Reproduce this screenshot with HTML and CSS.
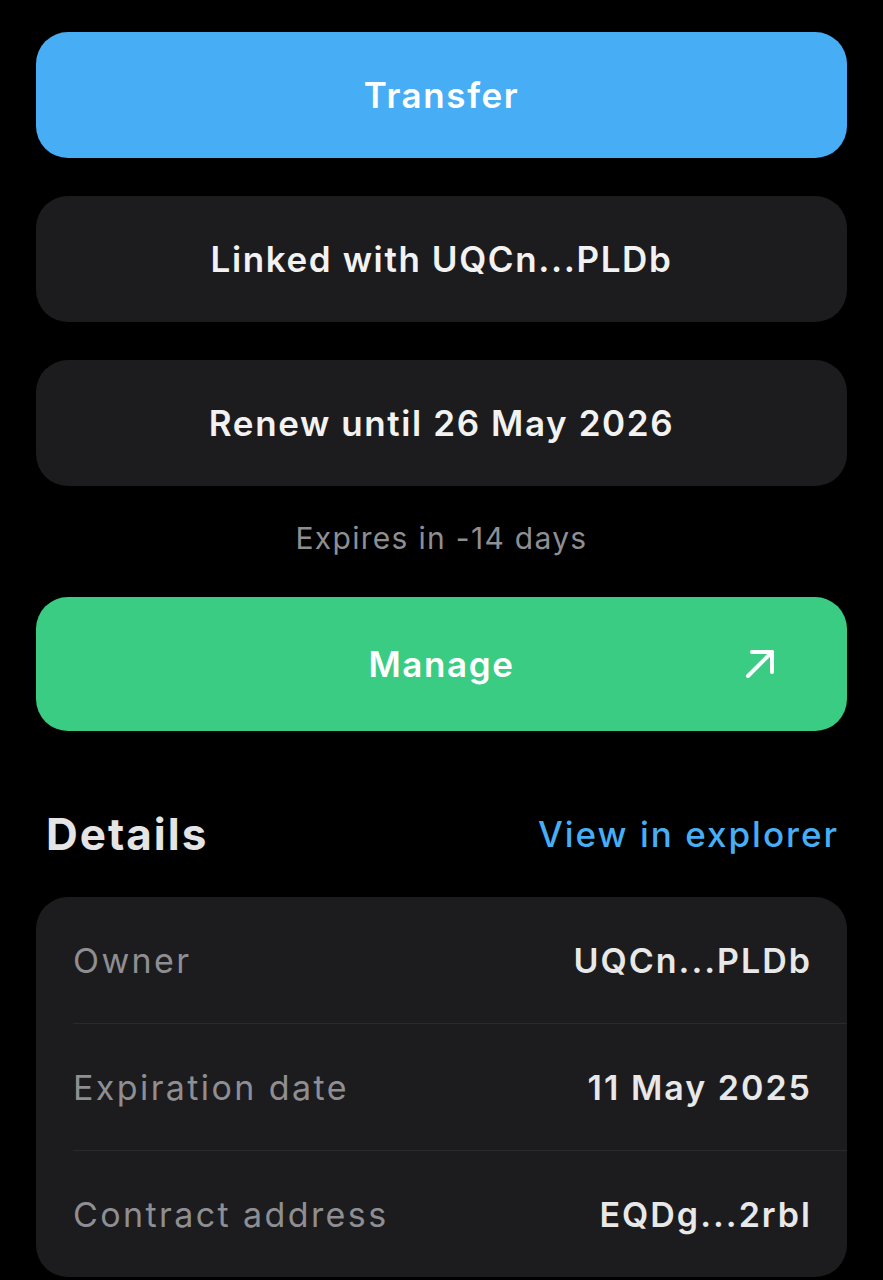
FILE: index.html
```html
<!DOCTYPE html>
<html lang="en">
    <head>
        <meta charset="utf-8">
        <meta name="viewport" content="width=device-width, initial-scale=1">
        <title>Domain</title>
        <link rel="stylesheet" href="styles.css">
    </head>
    <body>
        <div class="page">
            <div class="actions">
                <button class="btn btn-blue">Transfer</button>
                <button class="btn btn-dark">Linked with UQCn...PLDb</button>
                <button class="btn btn-dark">Renew until 26 May 2026</button>
            </div>
            <p class="expires">Expires in -14 days</p>
            <button class="btn btn-green">
                <span>Manage</span>
                <svg class="arrow" width="34" height="34" viewBox="0 0 34 34" fill="none" stroke="#fff" stroke-width="4" stroke-linecap="round" stroke-linejoin="round">
                    <path d="M5 29 L29 5"/>
                    <path d="M9 5 H29 V25"/>
                </svg>
            </button>
            <div class="details-head">
                <h2>Details</h2>
                <a href="#">View in explorer</a>
            </div>
            <div class="card">
                <div class="row">
                    <span class="label">Owner</span>
                    <span class="value">UQCn...PLDb</span>
                </div>
                <div class="row">
                    <span class="label">Expiration date</span>
                    <span class="value">11 May 2025</span>
                </div>
                <div class="row">
                    <span class="label">Contract address</span>
                    <span class="value">EQDg...2rbl</span>
                </div>
            </div>
        </div>
    </body>
</html>
```

FILE: styles.css
```css
body {
    margin: 0;
    background: #000;
    font-family: "Inter", "DejaVu Sans", sans-serif;
}
.page {
    padding: 32px 36px 0 36px;
}
.actions {
    display: flex;
    flex-direction: column;
    gap: 38px;
}
.btn {
    position: relative;
    display: flex;
    align-items: center;
    justify-content: center;
    width: 100%;
    height: 126px;
    border: none;
    border-radius: 32px;
    font-family: inherit;
    font-size: 35px;
    font-weight: 600;
    letter-spacing: 1.6px;
    color: #f2f2f2;
}
.btn-blue {
    background: #47aef6;
    color: #fff;
}
.btn-dark {
    background: #1c1c1e;
}
.btn-green {
    height: 134px;
    background: #3bcc83;
    color: #fff;
}
.arrow {
    position: absolute;
    right: 70px;
    top: 50px;
}
.expires {
    margin: 0;
    height: 111px;
    line-height: 104px;
    text-align: center;
    font-size: 30px;
    letter-spacing: 1.3px;
    color: #8e8e93;
}
.details-head {
    display: flex;
    justify-content: space-between;
    align-items: center;
    height: 66px;
    margin: 70px 10px 30px 10px;
}
.details-head h2 {
    margin: 0;
    font-size: 44px;
    font-weight: 700;
    letter-spacing: 2px;
    color: #e4e4e4;
}
.details-head a {
    font-size: 35px;
    font-weight: 500;
    letter-spacing: 2px;
    margin-right: -2px;
    color: #47aef6;
    text-decoration: none;
}
.card {
    background: #1c1c1e;
    border-radius: 32px;
    padding-left: 37px;
}
.row {
    display: flex;
    justify-content: space-between;
    align-items: center;
    height: 126px;
    padding-right: 37px;
    border-bottom: 1px solid #2a2a2c;
    font-size: 34px;
    letter-spacing: 2.4px;
}
.row:last-child {
    border-bottom: none;
}
.label {
    color: #8e8e93;
}
.value {
    color: #e8e8e8;
    font-weight: 600;
    letter-spacing: 2px;
    margin-right: -2px;
}
```
